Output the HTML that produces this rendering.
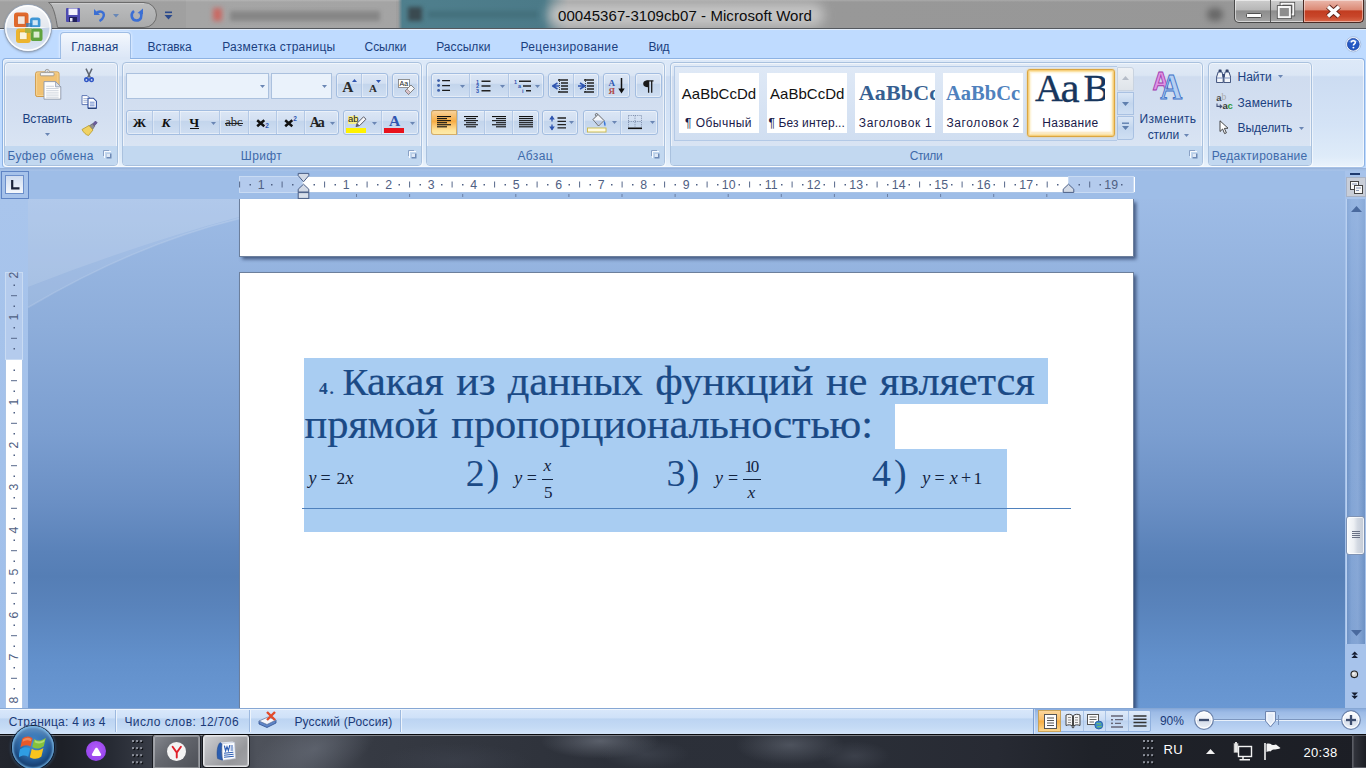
<!DOCTYPE html>
<html><head><meta charset="utf-8"><title>00045367-3109cb07 - Microsoft Word</title>
<style>
html,body{margin:0;padding:0;}
body{width:1366px;height:768px;overflow:hidden;position:relative;background:#bfdbff;}
#root{position:absolute;left:0;top:0;width:1366px;height:768px;overflow:hidden;font-family:"Liberation Sans",sans-serif;font-size:12px;color:#1b3f80;}
#root div,#root span,#root svg{position:absolute;box-sizing:border-box;}
#root span.t{white-space:nowrap;line-height:1;}
</style></head>
<body>
<div id="root">
<!-- s1_title -->
<div style="left:0px;top:0px;width:1366px;height:30px;background:linear-gradient(90deg,#a1a1a1 0,#9f9f9f 28%,#989898 60%,#979797 100%);"></div>
<div style="left:0px;top:0px;width:1366px;height:2px;background:linear-gradient(rgba(255,255,255,.18),rgba(255,255,255,0));"></div>
<div style="left:398px;top:0px;width:170px;height:28px;background:linear-gradient(90deg,rgba(78,124,138,0) 0,#4f7f8d 2.5%,#4b7a88 86%,rgba(78,124,138,0) 100%);"></div>
<div style="left:408px;top:7px;width:14px;height:14px;background:#3a4a50;filter:blur(2px);"></div>
<div style="left:428px;top:11px;width:110px;height:7px;background:#44707c;filter:blur(2px);"></div>
<div style="left:213px;top:8px;width:9px;height:13px;background:#c7605a;filter:blur(2.5px);"></div>
<div style="left:230px;top:10.5px;width:150px;height:10px;background:#7f7f7f;filter:blur(2.2px);"></div>
<div style="left:186px;top:0px;width:210px;height:28px;background:rgba(255,255,255,.06);"></div>
<div style="left:1207px;top:8px;width:16px;height:13px;background:#686868;filter:blur(3px);border-radius:6px;"></div>
<div style="left:548px;top:3px;width:276px;height:24px;background:#c9c9c9;filter:blur(6px);border-radius:12px;opacity:.9;"></div>
<span class="t" style="left:558.00px;top:8.20px;font-size:15px;color:#0c0c0c;letter-spacing:0.072px;">00045367-3109cb07 - Microsoft Word</span>
<div style="left:0px;top:28px;width:1366px;height:1px;background:#54585e;"></div>
<div style="left:0px;top:29px;width:1366px;height:1px;background:#e4effd;"></div>
<svg style="left:40px;top:0px;" width="125" height="30" viewBox="0 0 125 30"><defs><linearGradient id="qg" x1="0" y1="0" x2="0" y2="1"><stop offset="0" stop-color="#bcbdbe"/><stop offset="1" stop-color="#a9aaab"/></linearGradient></defs><path d="M8.5 2.5 C14 5.5 16 19 17.5 27.5 L104 27.5 A12.5 12.5 0 0 0 104 2.5 Z" fill="url(#qg)" stroke="#6c6c6c" stroke-width="1"/><path d="M12 3.6 L104 3.6" stroke="#d4d4d4" stroke-width="1" opacity=".8"/></svg>
<svg style="left:65px;top:7px;" width="16" height="16" viewBox="0 0 16 16"><rect x="1" y="1" width="14" height="14" rx="1" fill="#4d4bb0"/><rect x="3.5" y="1.5" width="9" height="6.5" fill="#f2f2fb"/><rect x="4" y="10" width="8" height="5" fill="#20205a"/><rect x="5" y="11" width="2.5" height="3.5" fill="#e8e8f5"/></svg>
<svg style="left:92px;top:8px;" width="16" height="14" viewBox="0 0 16 14"><path d="M2 1 L2 7 L8 7 Z" fill="#3b6fd4"/><path d="M4 5.5 C8 1.5 13 4 11.5 8.5 C11 10.5 9.5 12 7.5 13" fill="none" stroke="#3b6fd4" stroke-width="2.4"/></svg>
<svg style="left:113px;top:14px;" width="7" height="4" viewBox="0 0 7 4"><path d="M0 0 L6 0 L3 3.5 Z" fill="#6787b7"/></svg>
<svg style="left:129px;top:8px;" width="16" height="15" viewBox="0 0 16 15"><path d="M14 0.5 L14 6.5 L8.5 5 Z" fill="#3b6fd4"/><path d="M5 3 C1 6 2.5 12.5 7.5 12.5 C12 12.5 13.5 8 11.5 5" fill="none" stroke="#3b6fd4" stroke-width="2.6"/></svg>
<svg style="left:164px;top:11px;" width="10" height="10" viewBox="0 0 10 10"><rect x="1" y="0.5" width="7" height="1.6" fill="#2c4a8c"/><path d="M0.5 4 L8.5 4 L4.5 8.5 Z" fill="#2c4a8c"/></svg>
<div style="left:1234px;top:0px;width:130px;height:23px;border:1px solid #4a4a4a;border-top:none;border-radius:0 0 5px 5px;background:linear-gradient(#cdcdcd 0,#b7b7b7 44%,#8d8d8d 50%,#9a9a9a 80%,#a6a6a6 100%);box-shadow:inset 0 0 0 1px rgba(255,255,255,.55);"></div>
<div style="left:1270px;top:0px;width:1px;height:22px;background:#5a5a5a;"></div>
<div style="left:1303px;top:0px;width:61px;height:23px;border:1px solid #4a2a24;border-top:none;border-radius:0 0 5px 0;background:linear-gradient(#eab8ac 0,#dc8a76 44%,#c23c20 50%,#c8462a 75%,#d8684a 100%);box-shadow:inset 0 0 0 1px rgba(255,255,255,.45);"></div>
<div style="left:1245.5px;top:12.8px;width:16px;height:4.8px;background:#fbfbfb;border:1px solid #4e4e4e;border-radius:1.5px;"></div>
<svg style="left:1276px;top:1px;" width="20" height="19" viewBox="0 0 20 19"><rect x="5.5" y="2.7" width="11.8" height="10.8" fill="none" stroke="#4a4a4a" stroke-width="3.6"/><rect x="5.5" y="2.7" width="11.8" height="10.8" fill="none" stroke="#f6f6f6" stroke-width="2"/><rect x="2.7" y="6" width="11.2" height="10.2" fill="#a4a4a4" stroke="#4a4a4a" stroke-width="3.6"/><rect x="2.7" y="6" width="11.2" height="10.2" fill="#8e8e8e" stroke="#f6f6f6" stroke-width="2"/></svg>
<svg style="left:1324px;top:2.5px;" width="19" height="17" viewBox="0 0 19 17"><path d="M4 3.6 L15 13.4 M15 3.6 L4 13.4" stroke="#5a2018" stroke-width="5.4" stroke-linecap="butt"/><path d="M4 3.6 L15 13.4 M15 3.6 L4 13.4" stroke="#fdfdfd" stroke-width="3.5" stroke-linecap="butt"/></svg>
<div style="left:0px;top:30px;width:1366px;height:29px;background:#bfdbff;"></div>
<div style="left:60px;top:32px;width:71px;height:27px;background:linear-gradient(#f4f8fd 0,#e6eefa 50%,#dbe6f6 100%);border:1px solid #9ebde5;border-bottom:none;border-radius:4px 4px 0 0;box-shadow:0 0 3px rgba(255,255,255,.9);"></div>
<span class="t" style="left:71.30px;top:40.74px;font-size:12px;color:#1b3f80;letter-spacing:0.232px;">Главная</span>
<span class="t" style="left:147.60px;top:40.74px;font-size:12px;color:#1b3f80;letter-spacing:-0.100px;">Вставка</span>
<span class="t" style="left:222.20px;top:40.74px;font-size:12px;color:#1b3f80;letter-spacing:0.255px;">Разметка страницы</span>
<span class="t" style="left:364.60px;top:40.74px;font-size:12px;color:#1b3f80;letter-spacing:-0.091px;">Ссылки</span>
<span class="t" style="left:436.20px;top:40.74px;font-size:12px;color:#1b3f80;letter-spacing:0.055px;">Рассылки</span>
<span class="t" style="left:520.40px;top:40.74px;font-size:12px;color:#1b3f80;letter-spacing:0.389px;">Рецензирование</span>
<span class="t" style="left:648.60px;top:40.74px;font-size:12px;color:#1b3f80;letter-spacing:-0.436px;">Вид</span>
<svg style="left:1345px;top:35.5px;" width="17" height="17" viewBox="0 0 17 17"><circle cx="8.3" cy="8.3" r="7.6" fill="#f4f8ff" stroke="#9db6dc" stroke-width=".8"/><circle cx="8.3" cy="8.3" r="5.9" fill="#2458c4" stroke="#1a3f9a" stroke-width=".7"/><path d="M3.6 6.5 C5 2.5 11.6 2.5 13 6.5 C10 5 6.6 5 3.6 6.5 Z" fill="#6f9ae8" opacity=".8"/><path d="M6.3 6.6 C6.3 4.2 10.3 4.2 10.3 6.6 C10.3 8 8.4 8 8.4 9.6" fill="none" stroke="#fff" stroke-width="1.6"/><circle cx="8.4" cy="11.6" r=".95" fill="#fff"/></svg>
<div style="left:5px;top:5px;width:46px;height:46px;border-radius:50%;background:linear-gradient(#f4f6f9 0,#e4e8ee 48%,#c3d2e6 50%,#dfe8f3 100%);box-shadow:0 0 0 1px #9aa7ba,0 1px 3px rgba(0,0,0,.45),inset 0 0 0 1.5px rgba(255,255,255,.9);"></div>
<svg style="left:13px;top:11px;" width="31" height="33" viewBox="0 0 31 33"><rect x="1" y="1.4" width="14.5" height="15.4" rx="3" fill="#e0692c"/><rect x="4.6" y="5" width="7.4" height="8.2" fill="#f3e6dc"/><rect x="4.6" y="5" width="7.4" height="8.2" fill="none" stroke="#c9521a" stroke-width=".6"/><rect x="17" y="6.5" width="10.4" height="10.3" rx="2.6" fill="#3f97d6"/><rect x="19.6" y="9.2" width="5.2" height="5" fill="#d3e6f4"/><rect x="3" y="17.5" width="14.7" height="14.5" rx="3" fill="#ecb42c"/><rect x="6.6" y="21" width="7.4" height="7.6" fill="#fbf4dc"/><rect x="6.6" y="21" width="7.4" height="7.6" fill="none" stroke="#d49a14" stroke-width=".6"/><rect x="17.7" y="17.5" width="11.8" height="12.5" rx="2.6" fill="#5fa33e"/><rect x="20.6" y="20.6" width="5.8" height="6" fill="#dcecd2"/><rect x="13" y="12" width="6" height="4" fill="#2f7fc0" opacity=".7"/><rect x="12" y="17" width="7" height="5" fill="#8ab04a" opacity=".65"/></svg>
<div style="left:6px;top:27px;width:44px;height:1px;background:linear-gradient(90deg,rgba(255,255,255,0),rgba(255,255,255,.85) 20%,rgba(255,255,255,.85) 80%,rgba(255,255,255,0));"></div>
<!-- s2_ribbon -->
<div style="left:0px;top:58px;width:1366px;height:112px;background:#bfdbff;"></div>
<div style="left:2px;top:58px;width:1362.5px;height:110px;border:1px solid #8db2e3;border-bottom-color:#a6c1e6;border-radius:4px;background:linear-gradient(#dde9f8 0,#d9e6f7 15%,#ccdcf2 16.5%,#d4e3f6 60%,#deebf9 90%,#eaf3fc 100%);box-shadow:inset 0 0 0 1px rgba(255,255,255,.6);"></div>
<div style="left:0px;top:168px;width:1366px;height:3.5px;background:linear-gradient(#95afd6 0,#a3bfe6 40%,#a8c4ea 100%);"></div>
<div style="left:61px;top:57px;width:69px;height:3px;background:#dbe6f6;"></div>
<div style="left:4.4px;top:61.5px;width:113.19999999999999px;height:104px;border:1px solid #a9c1de;border-radius:4px;background:linear-gradient(#e1eaf6 0,#dbe6f4 12%,#cfdcef 13.5%,#d3dff1 50%,#d9e4f3 81%,#d9e4f3 100%);box-shadow:inset 0 0 0 1px rgba(255,255,255,.55),1px 1px 0 rgba(255,255,255,.55);overflow:hidden;"><div style="left:-1px;top:83.5px;width:113.19999999999999px;height:20px;background:#c2d8f0;"></div></div>
<span class="t" style="left:7.60px;top:150.34px;font-size:12px;color:#3e6aaa;letter-spacing:0.388px;">Буфер обмена</span>
<svg style="left:103.1px;top:150px;" width="9" height="9" viewBox="0 0 9 9"><path d="M0.5 6 L0.5 0.5 L6 0.5" fill="none" stroke="#8aa2c6" stroke-width="1"/><path d="M0.5 7 L0.5 .5 L7 .5" fill="none" stroke="#fff" stroke-width="1" transform="translate(1,1)" opacity=".9"/><rect x="3.5" y="3.5" width="5" height="5" fill="#6e8ab5"/><rect x="3.5" y="3.5" width="3.5" height="3.5" fill="#dfe9f6"/></svg>
<svg style="left:34px;top:68px;" width="29" height="33" viewBox="0 0 29 33"><rect x="1.6" y="3.9" width="23.4" height="24.6" rx="1.6" fill="#f1c273" stroke="#cf9a4a" stroke-width="1"/><rect x="2.6" y="4.9" width="21.4" height="22.6" rx="1" fill="none" stroke="#f8d99c" stroke-width=".8"/><circle cx="13.2" cy="3.4" r="2" fill="#f4f4f4" stroke="#8a8a8a" stroke-width=".8"/><circle cx="13.2" cy="3.2" r=".7" fill="#9a9a9a"/><rect x="6.4" y="4.6" width="13.6" height="3.2" rx=".8" fill="#f6f6f6" stroke="#8f8f8f" stroke-width=".8"/><path d="M10 13.6 L21.6 13.6 L26.8 18.8 L26.8 31.2 L10 31.2 Z" fill="#fdfdfd" stroke="#8d97aa" stroke-width=".9"/><path d="M21.6 13.6 L21.6 18.8 L26.8 18.8 Z" fill="#dfe4ec" stroke="#8d97aa" stroke-width=".8"/><path d="M12.2 18.3 H20 M12.2 20.5 H24.6 M12.2 22.7 H24.6 M12.2 24.9 H24.6 M12.2 27.1 H24.6 M12.2 29.2 H24.6" stroke="#c3cad6" stroke-width=".8"/></svg>
<span class="t" style="left:22.50px;top:112.84px;font-size:12px;color:#1b3f80;letter-spacing:-0.171px;">Вставить</span>
<svg style="left:44.7px;top:133.1px;" width="5" height="3" viewBox="0 0 5 3"><path d="M0 0 L5 0 L2.5 3 Z" fill="#6a86b4"/></svg>
<svg style="left:82.5px;top:68px;" width="12" height="15" viewBox="0 0 12 15"><path d="M3 0.6 L7.2 9.4 M9 0.6 L4.8 9.4" stroke="#5f6672" stroke-width="1.5"/><ellipse cx="3.5" cy="11.6" rx="2.5" ry="2.7" fill="#2f55c4"/><ellipse cx="8.5" cy="11.6" rx="2.5" ry="2.7" fill="#2f55c4"/><circle cx="3.4" cy="11.9" r=".9" fill="#cfdcf2"/><circle cx="8.6" cy="11.9" r=".9" fill="#cfdcf2"/></svg>
<svg style="left:80.5px;top:94.5px;" width="17" height="14" viewBox="0 0 17 14"><path d="M1 0.6 H6.2 L8.6 3 V9.6 H1 Z" fill="#fff" stroke="#5f78b4" stroke-width="1"/><path d="M2.4 3.6 H6.6 M2.4 5.4 H6.6 M2.4 7.2 H6.6" stroke="#8fa3cc" stroke-width=".8"/><path d="M7 3.2 H12.4 L15.4 6.2 V13 H7 Z" fill="#fff" stroke="#2d4c9c" stroke-width="1.1"/><path d="M7 13.4 H15.6" stroke="#20386e" stroke-width="1"/><path d="M8.8 7.2 H13.6 M8.8 9 H13.6 M8.8 10.8 H13.6" stroke="#5f7fc8" stroke-width=".9"/></svg>
<svg style="left:80.5px;top:120px;" width="17" height="16" viewBox="0 0 17 16"><path d="M11 4.5 L14.5 1 L16.2 2.8 L12.8 6.5 Z" fill="#6a5a9a" stroke="#4a3f78" stroke-width=".6"/><path d="M8.2 5.8 L11.5 3.8 L13.6 6.2 L11.5 9.6 Z" fill="#8f8f95" stroke="#5a5a60" stroke-width=".6"/><path d="M1 9.5 L8 5.5 L12 10 L7.5 15.5 C5 15 2.5 12.5 1 9.5 Z" fill="#f0d264" stroke="#b89a2a" stroke-width=".8"/></svg>
<div style="left:121.6px;top:61.5px;width:300.70000000000005px;height:104px;border:1px solid #a9c1de;border-radius:4px;background:linear-gradient(#e1eaf6 0,#dbe6f4 12%,#cfdcef 13.5%,#d3dff1 50%,#d9e4f3 81%,#d9e4f3 100%);box-shadow:inset 0 0 0 1px rgba(255,255,255,.55),1px 1px 0 rgba(255,255,255,.55);overflow:hidden;"><div style="left:-1px;top:83.5px;width:300.70000000000005px;height:20px;background:#c2d8f0;"></div></div>
<span class="t" style="left:240.80px;top:150.34px;font-size:12px;color:#3e6aaa;letter-spacing:0.384px;">Шрифт</span>
<svg style="left:407.8px;top:150px;" width="9" height="9" viewBox="0 0 9 9"><path d="M0.5 6 L0.5 0.5 L6 0.5" fill="none" stroke="#8aa2c6" stroke-width="1"/><path d="M0.5 7 L0.5 .5 L7 .5" fill="none" stroke="#fff" stroke-width="1" transform="translate(1,1)" opacity=".9"/><rect x="3.5" y="3.5" width="5" height="5" fill="#6e8ab5"/><rect x="3.5" y="3.5" width="3.5" height="3.5" fill="#dfe9f6"/></svg>
<div style="left:125.5px;top:73px;width:143.5px;height:26px;border:1px solid #abc1de;background:#eaf2fb;"></div>
<div style="left:270.5px;top:73px;width:61px;height:26px;border:1px solid #abc1de;background:#eaf2fb;"></div>
<svg style="left:259.9px;top:84.7px;" width="5" height="3" viewBox="0 0 5 3"><path d="M0 0 L5 0 L2.5 3 Z" fill="#6a86b4"/></svg>
<svg style="left:321.9px;top:84.7px;" width="5" height="3" viewBox="0 0 5 3"><path d="M0 0 L5 0 L2.5 3 Z" fill="#6a86b4"/></svg>
<div style="left:336.2px;top:73.4px;width:51.5px;height:25.0px;border:1px solid #a3bde0;border-radius:3px;background:linear-gradient(#dbe6f5 0,#d3e0f2 40%,#c3d5ec 45%,#cfdef2 100%);box-shadow:inset 0 0 0 1px rgba(255,255,255,.45);"></div>
<div style="left:361.2px;top:74.4px;width:1px;height:23.0px;background:#b4c9e6;"></div>
<div style="left:362.2px;top:74.4px;width:1px;height:23.0px;background:rgba(255,255,255,.35);"></div>
<span class="t" style="left:342.20px;top:79.22px;font-size:15.5px;color:#2a2a2a;font-family:'Liberation Serif',serif;font-weight:bold;">A</span>
<svg style="left:351.5px;top:79px;" width="5" height="3" viewBox="0 0 5 3"><path d="M0 3 L5 3 L2.5 0 Z" fill="#2f55b0"/></svg>
<span class="t" style="left:369.00px;top:82.99px;font-size:11px;color:#2a2a2a;font-family:'Liberation Serif',serif;font-weight:bold;">A</span>
<svg style="left:376.2px;top:80px;" width="5" height="3" viewBox="0 0 5 3"><path d="M0 0 L5 0 L2.5 3 Z" fill="#2f55b0"/></svg>
<div style="left:391.6px;top:73.4px;width:27.19999999999999px;height:25.0px;border:1px solid #a3bde0;border-radius:3px;background:linear-gradient(#dbe6f5 0,#d3e0f2 40%,#c3d5ec 45%,#cfdef2 100%);box-shadow:inset 0 0 0 1px rgba(255,255,255,.45);"></div>
<svg style="left:397.5px;top:78.5px;" width="18" height="17" viewBox="0 0 18 17"><rect x="0.5" y="0.5" width="11" height="8" fill="#fff" stroke="#7a7a7a" stroke-width=".8"/><text x="1.6" y="7.2" font-family="Liberation Sans" font-size="7" fill="#222">Aa</text><path d="M7 12 L13 6 L16.5 9.5 L10.5 15.5 Z" fill="#f4f4f6" stroke="#777" stroke-width=".9"/><path d="M7 12 L9 10 L12.5 13.5 L10.5 15.5 Z" fill="#d9c0c8" stroke="#777" stroke-width=".6"/></svg>
<div style="left:125.5px;top:110.4px;width:213.3px;height:24.599999999999994px;border:1px solid #a3bde0;border-radius:3px;background:linear-gradient(#dbe6f5 0,#d3e0f2 40%,#c3d5ec 45%,#cfdef2 100%);box-shadow:inset 0 0 0 1px rgba(255,255,255,.45);"></div>
<div style="left:151.6px;top:111.4px;width:1px;height:22.599999999999994px;background:#b4c9e6;"></div>
<div style="left:152.6px;top:111.4px;width:1px;height:22.599999999999994px;background:rgba(255,255,255,.35);"></div>
<div style="left:179.2px;top:111.4px;width:1px;height:22.599999999999994px;background:#b4c9e6;"></div>
<div style="left:180.2px;top:111.4px;width:1px;height:22.599999999999994px;background:rgba(255,255,255,.35);"></div>
<div style="left:219.4px;top:111.4px;width:1px;height:22.599999999999994px;background:#b4c9e6;"></div>
<div style="left:220.4px;top:111.4px;width:1px;height:22.599999999999994px;background:rgba(255,255,255,.35);"></div>
<div style="left:247.5px;top:111.4px;width:1px;height:22.599999999999994px;background:#b4c9e6;"></div>
<div style="left:248.5px;top:111.4px;width:1px;height:22.599999999999994px;background:rgba(255,255,255,.35);"></div>
<div style="left:275.6px;top:111.4px;width:1px;height:22.599999999999994px;background:#b4c9e6;"></div>
<div style="left:276.6px;top:111.4px;width:1px;height:22.599999999999994px;background:rgba(255,255,255,.35);"></div>
<div style="left:303.7px;top:111.4px;width:1px;height:22.599999999999994px;background:#b4c9e6;"></div>
<div style="left:304.7px;top:111.4px;width:1px;height:22.599999999999994px;background:rgba(255,255,255,.35);"></div>
<span class="t" style="left:132.73px;top:115.99px;font-size:13.5px;color:#111;font-family:'Liberation Serif',serif;font-weight:bold;">Ж</span>
<span class="t" style="left:161.42px;top:115.99px;font-size:13.5px;color:#111;font-family:'Liberation Serif',serif;font-weight:bold;font-style:italic;">К</span>
<span class="t" style="left:189.15px;top:115.89px;font-size:13.5px;color:#111;font-family:'Liberation Serif',serif;font-weight:bold;">Ч</span>
<div style="left:189.5px;top:128.2px;width:9.3px;height:1.2px;background:#111;"></div>
<svg style="left:211.0px;top:121.8px;" width="5" height="3" viewBox="0 0 5 3"><path d="M0 0 L5 0 L2.5 3 Z" fill="#6a86b4"/></svg>
<span class="t" style="left:225.13px;top:116.43px;font-size:12.5px;color:#222;font-family:'Liberation Serif',serif;">abc</span>
<div style="left:225px;top:123.3px;width:17.6px;height:1px;background:#222;"></div>
<svg style="left:255.7px;top:119.3px;" width="9.5" height="8.5" viewBox="0 0 9.5 8.5"><path d="M1.2 1.2 L8.3 7.3 M8.3 1.2 L1.2 7.3" stroke="#111" stroke-width="2.5"/></svg>
<span class="t" style="left:265.20px;top:123.30px;font-size:6.5px;color:#2f55b0;font-weight:bold;">2</span>
<svg style="left:283.9px;top:119.3px;" width="9.5" height="8.5" viewBox="0 0 9.5 8.5"><path d="M1.2 1.2 L8.3 7.3 M8.3 1.2 L1.2 7.3" stroke="#111" stroke-width="2.5"/></svg>
<span class="t" style="left:293.20px;top:115.90px;font-size:6.5px;color:#2f55b0;font-weight:bold;">2</span>
<span class="t" style="left:309.80px;top:116.28px;font-size:14px;color:#222;font-family:'Liberation Serif',serif;font-weight:bold;letter-spacing:-2.108px;">Aa</span>
<svg style="left:330.2px;top:121.8px;" width="5" height="3" viewBox="0 0 5 3"><path d="M0 0 L5 0 L2.5 3 Z" fill="#6a86b4"/></svg>
<div style="left:342.7px;top:110.4px;width:76.10000000000002px;height:24.599999999999994px;border:1px solid #a3bde0;border-radius:3px;background:linear-gradient(#dbe6f5 0,#d3e0f2 40%,#c3d5ec 45%,#cfdef2 100%);box-shadow:inset 0 0 0 1px rgba(255,255,255,.45);"></div>
<div style="left:380.5px;top:111.4px;width:1px;height:22.599999999999994px;background:#b4c9e6;"></div>
<div style="left:381.5px;top:111.4px;width:1px;height:22.599999999999994px;background:rgba(255,255,255,.35);"></div>
<div style="left:347.5px;top:115.5px;width:10.5px;height:8px;background:#f6ef8a;"></div>
<span class="t" style="left:348.00px;top:114.26px;font-size:9.5px;color:#222;">ab</span>
<svg style="left:354.5px;top:115.5px;" width="12" height="12" viewBox="0 0 12 12"><path d="M1 10.5 L2.2 7.2 L8.5 0.8 L11 3.2 L4.6 9.6 Z" fill="#f6f6f8" stroke="#4a4a55" stroke-width=".9"/><path d="M1 10.5 L2.2 7.2 L4.6 9.6 Z" fill="#5a5a66"/></svg>
<div style="left:345.9px;top:128px;width:20.2px;height:5.3px;background:#fff200;"></div>
<svg style="left:371.8px;top:121.8px;" width="5" height="3" viewBox="0 0 5 3"><path d="M0 0 L5 0 L2.5 3 Z" fill="#6a86b4"/></svg>
<span class="t" style="left:389.00px;top:113.32px;font-size:15.5px;color:#2f55b0;font-family:'Liberation Serif',serif;font-weight:bold;">A</span>
<div style="left:384.2px;top:128px;width:19.8px;height:5.3px;background:#e8121c;"></div>
<svg style="left:410.2px;top:121.8px;" width="5" height="3" viewBox="0 0 5 3"><path d="M0 0 L5 0 L2.5 3 Z" fill="#6a86b4"/></svg>
<!-- s2b_ribbon -->
<div style="left:426.1px;top:61.5px;width:239.39999999999998px;height:104px;border:1px solid #a9c1de;border-radius:4px;background:linear-gradient(#e1eaf6 0,#dbe6f4 12%,#cfdcef 13.5%,#d3dff1 50%,#d9e4f3 81%,#d9e4f3 100%);box-shadow:inset 0 0 0 1px rgba(255,255,255,.55),1px 1px 0 rgba(255,255,255,.55);overflow:hidden;"><div style="left:-1px;top:83.5px;width:239.39999999999998px;height:20px;background:#c2d8f0;"></div></div>
<span class="t" style="left:517.45px;top:150.34px;font-size:12px;color:#3e6aaa;letter-spacing:0.368px;">Абзац</span>
<svg style="left:651.0px;top:150px;" width="9" height="9" viewBox="0 0 9 9"><path d="M0.5 6 L0.5 0.5 L6 0.5" fill="none" stroke="#8aa2c6" stroke-width="1"/><path d="M0.5 7 L0.5 .5 L7 .5" fill="none" stroke="#fff" stroke-width="1" transform="translate(1,1)" opacity=".9"/><rect x="3.5" y="3.5" width="5" height="5" fill="#6e8ab5"/><rect x="3.5" y="3.5" width="3.5" height="3.5" fill="#dfe9f6"/></svg>
<div style="left:430.5px;top:73.4px;width:113.20000000000005px;height:25.0px;border:1px solid #a3bde0;border-radius:3px;background:linear-gradient(#dbe6f5 0,#d3e0f2 40%,#c3d5ec 45%,#cfdef2 100%);box-shadow:inset 0 0 0 1px rgba(255,255,255,.45);"></div>
<div style="left:468.8px;top:74.4px;width:1px;height:23.0px;background:#b4c9e6;"></div>
<div style="left:469.8px;top:74.4px;width:1px;height:23.0px;background:rgba(255,255,255,.35);"></div>
<div style="left:508.2px;top:74.4px;width:1px;height:23.0px;background:#b4c9e6;"></div>
<div style="left:509.2px;top:74.4px;width:1px;height:23.0px;background:rgba(255,255,255,.35);"></div>
<svg style="left:437px;top:79px;" width="14" height="13" viewBox="0 0 14 13"><circle cx="1.6" cy="1.6" r="1.45" fill="#3d5fa8"/><circle cx="1.6" cy="6.5" r="1.45" fill="#3d5fa8"/><circle cx="1.6" cy="11.4" r="1.45" fill="#3d5fa8"/><path d="M5.1 1.6 H13 M5.1 6.5 H13 M5.1 11.4 H13" stroke="#1a1a1a" stroke-width="1.25"/></svg>
<svg style="left:459.8px;top:84.7px;" width="5" height="3" viewBox="0 0 5 3"><path d="M0 0 L5 0 L2.5 3 Z" fill="#6a86b4"/></svg>
<svg style="left:475.5px;top:79px;" width="15" height="14" viewBox="0 0 15 14"><text x="0" y="4.6" font-family="Liberation Sans" font-weight="bold" font-size="5.5" fill="#2f55b0">1</text><text x="0" y="9.4" font-family="Liberation Sans" font-weight="bold" font-size="5.5" fill="#2f55b0">2</text><text x="0" y="14" font-family="Liberation Sans" font-weight="bold" font-size="5.5" fill="#2f55b0">3</text><path d="M5.5 2.2 H14.5 M5.5 7 H14.5 M5.5 11.8 H14.5" stroke="#222" stroke-width="1.4"/></svg>
<svg style="left:499.7px;top:84.7px;" width="5" height="3" viewBox="0 0 5 3"><path d="M0 0 L5 0 L2.5 3 Z" fill="#6a86b4"/></svg>
<svg style="left:513.5px;top:79px;" width="18" height="14" viewBox="0 0 18 14"><text x="0" y="4.6" font-family="Liberation Sans" font-weight="bold" font-size="5.5" fill="#2f55b0">1</text><text x="4" y="9.4" font-family="Liberation Sans" font-weight="bold" font-size="5.5" fill="#2f55b0">a</text><text x="8" y="14" font-family="Liberation Sans" font-weight="bold" font-size="5.5" fill="#2f55b0">i</text><path d="M5 2.2 H17 M9 7 H17 M12 11.8 H17" stroke="#222" stroke-width="1.4"/></svg>
<svg style="left:535.1px;top:84.7px;" width="5" height="3" viewBox="0 0 5 3"><path d="M0 0 L5 0 L2.5 3 Z" fill="#6a86b4"/></svg>
<div style="left:547.5px;top:73.4px;width:51.799999999999955px;height:25.0px;border:1px solid #a3bde0;border-radius:3px;background:linear-gradient(#dbe6f5 0,#d3e0f2 40%,#c3d5ec 45%,#cfdef2 100%);box-shadow:inset 0 0 0 1px rgba(255,255,255,.45);"></div>
<div style="left:573.3px;top:74.4px;width:1px;height:23.0px;background:#b4c9e6;"></div>
<div style="left:574.3px;top:74.4px;width:1px;height:23.0px;background:rgba(255,255,255,.35);"></div>
<svg style="left:552px;top:79px;" width="17" height="14" viewBox="0 0 17 14"><path d="M5.5 4 L0.5 7 L5.5 10 M0.5 7 H7" fill="none" stroke="#2f55b0" stroke-width="1.5"/><path d="M6 1 H16 M9 4 H16 M9 7 H16 M9 10 H16 M6 13 H16" stroke="#222" stroke-width="1.4"/><path d="M7.5 0 V14" stroke="#222" stroke-width=".8" stroke-dasharray="1 1"/></svg>
<svg style="left:578px;top:79px;" width="17" height="14" viewBox="0 0 17 14"><path d="M2 4 L7 7 L2 10 M0 7 H7" fill="none" stroke="#2f55b0" stroke-width="1.5"/><path d="M6 1 H16 M9 4 H16 M9 7 H16 M9 10 H16 M6 13 H16" stroke="#222" stroke-width="1.4"/><path d="M7.5 0 V14" stroke="#222" stroke-width=".8" stroke-dasharray="1 1"/></svg>
<div style="left:603.3px;top:73.4px;width:27.0px;height:25.0px;border:1px solid #a3bde0;border-radius:3px;background:linear-gradient(#dbe6f5 0,#d3e0f2 40%,#c3d5ec 45%,#cfdef2 100%);box-shadow:inset 0 0 0 1px rgba(255,255,255,.45);"></div>
<span class="t" style="left:608.50px;top:79.26px;font-size:9px;color:#2f55b0;font-family:'Liberation Serif',serif;font-weight:bold;">А</span>
<span class="t" style="left:608.50px;top:87.46px;font-size:9px;color:#b04a4a;font-family:'Liberation Serif',serif;font-weight:bold;">Я</span>
<svg style="left:617.5px;top:78px;" width="7" height="16" viewBox="0 0 7 16"><path d="M3.5 0 V12" stroke="#111" stroke-width="1.5"/><path d="M0.3 10.5 L6.7 10.5 L3.5 15.5 Z" fill="#111"/></svg>
<div style="left:634.5px;top:73.4px;width:27.200000000000045px;height:25.0px;border:1px solid #a3bde0;border-radius:3px;background:linear-gradient(#dbe6f5 0,#d3e0f2 40%,#c3d5ec 45%,#cfdef2 100%);box-shadow:inset 0 0 0 1px rgba(255,255,255,.45);"></div>
<svg style="left:643px;top:79.5px;" width="11" height="13" viewBox="0 0 11 13"><path d="M4.6 0.3 H10.5 V1.5 H4.6 Z" fill="#1a1a1a"/><path d="M5.2 0.3 C1.5 0.3 0.2 2 0.2 3.8 C0.2 5.8 1.8 7.3 5.2 7.3 Z" fill="#1a1a1a"/><path d="M5.6 0.8 V12.8 M8.7 0.8 V12.8" stroke="#1a1a1a" stroke-width="1.3"/></svg>
<div style="left:430.5px;top:110.4px;width:108.10000000000002px;height:24.599999999999994px;border:1px solid #a3bde0;border-radius:3px;background:linear-gradient(#dbe6f5 0,#d3e0f2 40%,#c3d5ec 45%,#cfdef2 100%);box-shadow:inset 0 0 0 1px rgba(255,255,255,.45);"></div>
<div style="left:430.5px;top:110.4px;width:26.5px;height:24.599999999999994px;border:1px solid #d4ad68;border-top-color:#b8935a;border-radius:3px 0 0 3px;background:linear-gradient(#f9d29a 0,#f8bd6a 25%,#f8ad44 45%,#fbc56e 62%,#fee49c 85%,#fdeaa8 100%);"></div>
<div style="left:484.4px;top:111.4px;width:1px;height:22.599999999999994px;background:#b4c9e6;"></div>
<div style="left:485.4px;top:111.4px;width:1px;height:22.599999999999994px;background:rgba(255,255,255,.35);"></div>
<div style="left:512.4px;top:111.4px;width:1px;height:22.599999999999994px;background:#b4c9e6;"></div>
<div style="left:513.4px;top:111.4px;width:1px;height:22.599999999999994px;background:rgba(255,255,255,.35);"></div>
<div style="left:457px;top:111.3px;width:1px;height:22.5px;background:#aac2e2;"></div>
<svg style="left:437.2px;top:116.2px;" width="14" height="12.299999999999999" viewBox="0 0 14 12.299999999999999"><rect x="0" y="0.0" width="14" height="1.1" fill="#111"/><rect x="0" y="2.05" width="10" height="1.1" fill="#111"/><rect x="0" y="4.1" width="14" height="1.1" fill="#111"/><rect x="0" y="6.1499999999999995" width="10" height="1.1" fill="#111"/><rect x="0" y="8.2" width="14" height="1.1" fill="#111"/><rect x="0" y="10.25" width="10" height="1.1" fill="#111"/></svg>
<svg style="left:464px;top:116.2px;" width="14" height="12.299999999999999" viewBox="0 0 14 12.299999999999999"><rect x="0.0" y="0.0" width="14" height="1.1" fill="#111"/><rect x="2.0" y="2.05" width="10" height="1.1" fill="#111"/><rect x="0.0" y="4.1" width="14" height="1.1" fill="#111"/><rect x="2.0" y="6.1499999999999995" width="10" height="1.1" fill="#111"/><rect x="0.0" y="8.2" width="14" height="1.1" fill="#111"/><rect x="2.0" y="10.25" width="10" height="1.1" fill="#111"/></svg>
<svg style="left:491.5px;top:116.2px;" width="14" height="12.299999999999999" viewBox="0 0 14 12.299999999999999"><rect x="0" y="0.0" width="14" height="1.1" fill="#111"/><rect x="4" y="2.05" width="10" height="1.1" fill="#111"/><rect x="0" y="4.1" width="14" height="1.1" fill="#111"/><rect x="4" y="6.1499999999999995" width="10" height="1.1" fill="#111"/><rect x="0" y="8.2" width="14" height="1.1" fill="#111"/><rect x="4" y="10.25" width="10" height="1.1" fill="#111"/></svg>
<svg style="left:519px;top:116.2px;" width="14" height="12.299999999999999" viewBox="0 0 14 12.299999999999999"><rect x="0" y="0.0" width="14" height="1.1" fill="#111"/><rect x="0" y="2.05" width="14" height="1.1" fill="#111"/><rect x="0" y="4.1" width="14" height="1.1" fill="#111"/><rect x="0" y="6.1499999999999995" width="14" height="1.1" fill="#111"/><rect x="0" y="8.2" width="14" height="1.1" fill="#111"/><rect x="0" y="10.25" width="14" height="1.1" fill="#111"/></svg>
<div style="left:542.4px;top:110.4px;width:36.10000000000002px;height:24.599999999999994px;border:1px solid #a3bde0;border-radius:3px;background:linear-gradient(#dbe6f5 0,#d3e0f2 40%,#c3d5ec 45%,#cfdef2 100%);box-shadow:inset 0 0 0 1px rgba(255,255,255,.45);"></div>
<svg style="left:548.5px;top:114.5px;" width="18" height="16" viewBox="0 0 18 16"><path d="M3 1.5 V6.5 M3 9.5 V14.5" stroke="#2f55b0" stroke-width="1.3"/><path d="M0.2 4.6 L3 0.4 L5.8 4.6 Z M0.2 11.4 L3 15.6 L5.8 11.4 Z" fill="#2f55b0"/><path d="M8.5 3 H17 M8.5 6.3 H17 M8.5 9.6 H17 M8.5 12.9 H17" stroke="#222" stroke-width="1.3"/></svg>
<svg style="left:568.8px;top:120.8px;" width="5" height="3" viewBox="0 0 5 3"><path d="M0 0 L5 0 L2.5 3 Z" fill="#6a86b4"/></svg>
<div style="left:582.7px;top:110.4px;width:75.79999999999995px;height:24.599999999999994px;border:1px solid #a3bde0;border-radius:3px;background:linear-gradient(#dbe6f5 0,#d3e0f2 40%,#c3d5ec 45%,#cfdef2 100%);box-shadow:inset 0 0 0 1px rgba(255,255,255,.45);"></div>
<div style="left:619.8px;top:111.4px;width:1px;height:22.599999999999994px;background:#b4c9e6;"></div>
<div style="left:620.8px;top:111.4px;width:1px;height:22.599999999999994px;background:rgba(255,255,255,.35);"></div>
<svg style="left:587px;top:112.5px;" width="20" height="20" viewBox="0 0 20 20"><path d="M6 6.5 L11 1.5 L17 7.5 L11.5 13 Z" fill="#f4f6fa" stroke="#555" stroke-width=".9"/><path d="M7 7.5 L16 7.5 L11.5 12 Z" fill="#b9c9e4"/><path d="M11 1.5 C9 -0.5 7.5 1 9 3.2" fill="none" stroke="#555" stroke-width=".9"/><path d="M17 7.5 C19 9.5 19 12 18 13.5 C17 12 16.5 10 17 7.5 Z" fill="#3a76d8"/><rect x="0.5" y="15" width="18.5" height="4" fill="#fffbe0" stroke="#c9b84a" stroke-width=".9"/></svg>
<svg style="left:611.6px;top:120.8px;" width="5" height="3" viewBox="0 0 5 3"><path d="M0 0 L5 0 L2.5 3 Z" fill="#6a86b4"/></svg>
<svg style="left:627.5px;top:115px;" width="14" height="15" viewBox="0 0 14 15"><path d="M0.5 0.5 H13.5 M0.5 6.5 H13.5 M0.5 0.5 V12 M7 0.5 V12 M13.5 0.5 V12" stroke="#7a8aa8" stroke-width="1" stroke-dasharray="1 1.2" fill="none"/><path d="M0 13.3 H14" stroke="#111" stroke-width="1.6"/></svg>
<svg style="left:650.1px;top:120.8px;" width="5" height="3" viewBox="0 0 5 3"><path d="M0 0 L5 0 L2.5 3 Z" fill="#6a86b4"/></svg>
<div style="left:669.5px;top:61.5px;width:533.5px;height:104px;border:1px solid #a9c1de;border-radius:4px;background:linear-gradient(#e1eaf6 0,#dbe6f4 12%,#cfdcef 13.5%,#d3dff1 50%,#d9e4f3 81%,#d9e4f3 100%);box-shadow:inset 0 0 0 1px rgba(255,255,255,.55),1px 1px 0 rgba(255,255,255,.55);overflow:hidden;"><div style="left:-1px;top:83.5px;width:533.5px;height:20px;background:#c2d8f0;"></div></div>
<span class="t" style="left:909.80px;top:150.34px;font-size:12px;color:#3e6aaa;letter-spacing:-0.434px;">Стили</span>
<svg style="left:1188.5px;top:150px;" width="9" height="9" viewBox="0 0 9 9"><path d="M0.5 6 L0.5 0.5 L6 0.5" fill="none" stroke="#8aa2c6" stroke-width="1"/><path d="M0.5 7 L0.5 .5 L7 .5" fill="none" stroke="#fff" stroke-width="1" transform="translate(1,1)" opacity=".9"/><rect x="3.5" y="3.5" width="5" height="5" fill="#6e8ab5"/><rect x="3.5" y="3.5" width="3.5" height="3.5" fill="#dfe9f6"/></svg>
<div style="left:674.2px;top:65.8px;width:443px;height:75px;border:1px solid #b3c9e6;border-right:none;background:linear-gradient(#dfe9f6,#d0def1);"></div>
<div style="left:678.9px;top:72.8px;width:80px;height:60px;background:#fff;overflow:hidden;"></div>
<span class="t" style="left:685.00px;top:116.54px;font-size:12px;color:#1a1a4a;letter-spacing:0.465px;">¶ Обычный</span>
<div style="left:767.1px;top:72.8px;width:80px;height:60px;background:#fff;overflow:hidden;"></div>
<span class="t" style="left:768.60px;top:116.54px;font-size:12px;color:#1a1a4a;letter-spacing:0.104px;">¶ Без интер...</span>
<div style="left:855.2px;top:72.8px;width:80px;height:60px;background:#fff;overflow:hidden;"></div>
<span class="t" style="left:858.80px;top:116.54px;font-size:12px;color:#1a1a4a;letter-spacing:0.634px;">Заголовок 1</span>
<div style="left:943.2px;top:72.8px;width:80px;height:60px;background:#fff;overflow:hidden;"></div>
<span class="t" style="left:946.40px;top:116.54px;font-size:12px;color:#1a1a4a;letter-spacing:0.634px;">Заголовок 2</span>
<span class="t" style="left:681.80px;top:86.30px;font-size:15px;color:#111;letter-spacing:0.025px;">AaBbCcDd</span>
<span class="t" style="left:770.00px;top:86.30px;font-size:15px;color:#111;letter-spacing:0.025px;">AaBbCcDd</span>
<div style="left:855.2px;top:72.8px;width:80px;height:60px;overflow:hidden;"><span class="t" style="left:3.50px;top:8.78px;font-size:22px;color:#365f91;font-family:'Liberation Serif',serif;font-weight:bold;letter-spacing:0.175px;">AaBbCc</span></div>
<span class="t" style="left:946.00px;top:82.83px;font-size:20.5px;color:#4f81bd;font-family:'Liberation Serif',serif;font-weight:bold;letter-spacing:0.028px;">AaBbCc</span>
<div style="left:1027.4px;top:69.3px;width:87.2px;height:67.6px;border-radius:3px;background:#fff;border:1px solid #dba640;box-shadow:inset 0 0 0 1px #f6cf7c,inset 0 0 0 2px #fbe2a6,inset 0 0 2px 3px #fdf0cf,inset 0 -4px 3px -1px #f3bf5c,0 0 2px rgba(240,190,90,.8);overflow:hidden;"></div>
<span class="t" style="left:1035.00px;top:69.36px;font-size:38.5px;color:#17365d;font-family:'Liberation Serif',serif;-webkit-text-stroke:0.3px #17365d;">A</span>
<span class="t" style="left:1060.60px;top:65.69px;font-size:43px;color:#17365d;font-family:'Liberation Serif',serif;-webkit-text-stroke:0.3px #17365d;">a</span>
<div style="left:1080px;top:70px;width:25px;height:60px;overflow:hidden;"><span class="t" style="left:3.60px;top:-0.64px;font-size:38.5px;color:#17365d;font-family:'Liberation Serif',serif;-webkit-text-stroke:0.3px #17365d;">B</span></div>
<span class="t" style="left:1042.30px;top:116.54px;font-size:12px;color:#1a1a4a;letter-spacing:0.322px;">Название</span>
<div style="left:1117px;top:67px;width:16.5px;height:24px;border:1px solid #c9d3e0;border-radius:0 3px 0 0;background:linear-gradient(#eef1f5,#dfe4ea);"></div>
<svg style="left:1121.5px;top:76px;" width="7" height="4" viewBox="0 0 7 4"><path d="M0 4 L7 4 L3.5 0 Z" fill="#b5bcc8"/></svg>
<div style="left:1117px;top:92px;width:16.5px;height:23px;border:1px solid #a9c1e2;background:linear-gradient(#dbe7f6,#c3d6ee 50%,#cfdff3);"></div>
<svg style="left:1121.5px;top:101.5px;" width="7" height="4" viewBox="0 0 7 4"><path d="M0 0 L7 0 L3.5 4 Z" fill="#5f7fae"/></svg>
<div style="left:1117px;top:116px;width:16.5px;height:23.5px;border:1px solid #a9c1e2;border-radius:0 0 3px 0;background:linear-gradient(#dbe7f6,#c3d6ee 50%,#cfdff3);"></div>
<svg style="left:1121.5px;top:122px;" width="7" height="10" viewBox="0 0 7 10"><rect x="0" y="0.5" width="7" height="1.4" fill="#5f7fae"/><path d="M0 4 L7 4 L3.5 8 Z" fill="#5f7fae"/></svg>
<svg style="left:1150px;top:68px;" width="36" height="34" viewBox="0 0 36 34"><text x="2.6" y="22.4" font-family="Liberation Sans" font-weight="bold" font-size="25.8" textLength="16.5" lengthAdjust="spacingAndGlyphs" fill="#df94e4" stroke="#a23aae" stroke-width=".9">A</text><text x="10.3" y="30.6" font-family="Liberation Serif" font-weight="bold" font-size="35" textLength="22" lengthAdjust="spacingAndGlyphs" fill="#b4cff2" stroke="#3f72c8" stroke-width="1">A</text></svg>
<span class="t" style="left:1139.50px;top:113.04px;font-size:12px;color:#1b3f80;letter-spacing:0.346px;">Изменить</span>
<span class="t" style="left:1147.70px;top:129.44px;font-size:12px;color:#1b3f80;letter-spacing:-0.121px;">стили</span>
<svg style="left:1183.7px;top:133.5px;" width="5" height="3" viewBox="0 0 5 3"><path d="M0 0 L5 0 L2.5 3 Z" fill="#6a86b4"/></svg>
<div style="left:1207.8px;top:61.5px;width:103.79999999999995px;height:104px;border:1px solid #a9c1de;border-radius:4px;background:linear-gradient(#e1eaf6 0,#dbe6f4 12%,#cfdcef 13.5%,#d3dff1 50%,#d9e4f3 81%,#d9e4f3 100%);box-shadow:inset 0 0 0 1px rgba(255,255,255,.55),1px 1px 0 rgba(255,255,255,.55);overflow:hidden;"><div style="left:-1px;top:83.5px;width:103.79999999999995px;height:20px;background:#c2d8f0;"></div></div>
<span class="t" style="left:1211.80px;top:150.34px;font-size:12px;color:#3e6aaa;letter-spacing:0.313px;">Редактирование</span>
<svg style="left:1216px;top:68.6px;" width="15.4" height="14.6" viewBox="0 0 15.4 14.6"><rect x="2.6" y="0.4" width="3" height="2.6" rx=".6" fill="#2f3f66"/><rect x="9.6" y="0.4" width="3" height="2.6" rx=".6" fill="#2f3f66"/><path d="M2.2 3 H6 L7.2 8 V13.6 H0.6 V8 Z" fill="#f2f5fa" stroke="#3a4c78" stroke-width="1"/><path d="M9.2 3 H13 L14.6 8 V13.6 H8 V8 Z" fill="#f2f5fa" stroke="#3a4c78" stroke-width="1"/><path d="M0.8 9 H7 M8.2 9 H14.4" stroke="#7f93c0" stroke-width="1"/><rect x="6.4" y="5" width="2.4" height="3.4" fill="#3a4c78"/></svg>
<span class="t" style="left:1237.50px;top:70.74px;font-size:12px;color:#1b3f80;letter-spacing:0.012px;">Найти</span>
<svg style="left:1277.7px;top:75.0px;" width="5" height="3" viewBox="0 0 5 3"><path d="M0 0 L5 0 L2.5 3 Z" fill="#6a86b4"/></svg>
<span class="t" style="left:1216.30px;top:93.16px;font-size:9.5px;color:#4a4a4a;font-weight:bold;">a</span>
<span class="t" style="left:1221.60px;top:93.24px;font-size:9.5px;color:#a8a8a8;font-family:'Liberation Serif',serif;">b</span>
<span class="t" style="left:1222.40px;top:101.36px;font-size:9.5px;color:#3a3a3a;font-weight:bold;">a</span>
<span class="t" style="left:1227.60px;top:101.36px;font-size:9.5px;color:#2f9a3a;font-weight:bold;">c</span>
<svg style="left:1216.4px;top:102.6px;" width="7" height="6" viewBox="0 0 7 6"><path d="M1 0.4 V3.4 H5.6 M3.8 1.6 L5.8 3.4 L3.8 5.2" fill="none" stroke="#44527a" stroke-width="1.1"/></svg>
<span class="t" style="left:1237.50px;top:96.64px;font-size:12px;color:#1b3f80;letter-spacing:0.109px;">Заменить</span>
<svg style="left:1219px;top:119.5px;" width="10" height="15" viewBox="0 0 10 15"><path d="M1 0.8 L1 11.5 L3.6 9 L5.6 13.6 L7.4 12.8 L5.4 8.4 L9 8.2 Z" fill="#fff" stroke="#333" stroke-width=".9"/></svg>
<span class="t" style="left:1237.50px;top:122.24px;font-size:12px;color:#1b3f80;letter-spacing:-0.070px;">Выделить</span>
<svg style="left:1299.1px;top:126.5px;" width="5" height="3" viewBox="0 0 5 3"><path d="M0 0 L5 0 L2.5 3 Z" fill="#6a86b4"/></svg>
<!-- s3_ruler -->
<div style="left:0px;top:171px;width:1366px;height:537px;background:linear-gradient(#a2bfe8 0,#9ebce6 5%,#8dadda 29%,#7b9ed0 49%,#6a8fc4 62%,#5a82b9 71%,#557eb5 75.5%,#5983bb 81%,#6290cb 91%,#6a98d3 100%);"></div>
<svg style="left:0px;top:0px;" width="250" height="330" viewBox="0 0 250 330"><path d="M28 199 L239 199 L239 217 Q136.5 244.6 28 287 Z" fill="rgba(255,255,255,.2)"/><path d="M239 217 Q136.5 244.6 28 287 L28 307.5 Q136.5 243.7 239 218.7 Z" fill="rgba(255,255,255,.1)"/><path d="M28 307.5 Q136.5 243.7 239 218.7" fill="none" stroke="rgba(255,255,255,.13)" stroke-width="1.5"/></svg>
<div style="left:0px;top:171px;width:1366px;height:28px;background:#9ebde7;"></div>
<div style="left:0px;top:199px;width:28px;height:509px;background:linear-gradient(#a9c5ec,#a3c1ea 50%,#9fbfeb);"></div>
<div style="left:0.5px;top:171px;width:28px;height:27.5px;border:1px solid #5f84c4;background:#a6c2ea;"></div>
<div style="left:5px;top:175px;width:19px;height:19px;border:1px solid #6c8fcb;background:linear-gradient(#cfdcf0,#f4f7fc);"></div>
<svg style="left:11px;top:180px;" width="9" height="10" viewBox="0 0 9 10"><path d="M1.2 0 V8.3 H8.5" fill="none" stroke="#1a2238" stroke-width="2.2"/></svg>
<div style="left:239px;top:176px;width:895.5px;height:17px;background:#fff;border:1px solid #aac4e6;border-left:none;border-right:none;"></div>
<div style="left:239px;top:176px;width:64.4px;height:17px;background:#b4cbed;border:1px solid #c9dbf3;"></div>
<div style="left:1068.3px;top:176px;width:66.2px;height:17px;background:#b4cbed;border:1px solid #c9dbf3;"></div>
<span class="t" style="left:342.78px;top:179.09px;font-size:12.3px;color:#4f6083;">1</span>
<span class="t" style="left:385.28px;top:179.09px;font-size:12.3px;color:#4f6083;">2</span>
<span class="t" style="left:427.78px;top:179.09px;font-size:12.3px;color:#4f6083;">3</span>
<span class="t" style="left:470.28px;top:179.09px;font-size:12.3px;color:#4f6083;">4</span>
<span class="t" style="left:512.78px;top:179.09px;font-size:12.3px;color:#4f6083;">5</span>
<span class="t" style="left:555.28px;top:179.09px;font-size:12.3px;color:#4f6083;">6</span>
<span class="t" style="left:597.78px;top:179.09px;font-size:12.3px;color:#4f6083;">7</span>
<span class="t" style="left:640.28px;top:179.09px;font-size:12.3px;color:#4f6083;">8</span>
<span class="t" style="left:682.78px;top:179.09px;font-size:12.3px;color:#4f6083;">9</span>
<span class="t" style="left:721.86px;top:179.09px;font-size:12.3px;color:#4f6083;">10</span>
<span class="t" style="left:764.82px;top:179.09px;font-size:12.3px;color:#4f6083;">11</span>
<span class="t" style="left:806.86px;top:179.09px;font-size:12.3px;color:#4f6083;">12</span>
<span class="t" style="left:849.36px;top:179.09px;font-size:12.3px;color:#4f6083;">13</span>
<span class="t" style="left:891.86px;top:179.09px;font-size:12.3px;color:#4f6083;">14</span>
<span class="t" style="left:934.36px;top:179.09px;font-size:12.3px;color:#4f6083;">15</span>
<span class="t" style="left:976.86px;top:179.09px;font-size:12.3px;color:#4f6083;">16</span>
<span class="t" style="left:1019.36px;top:179.09px;font-size:12.3px;color:#4f6083;">17</span>
<span class="t" style="left:1104.36px;top:179.09px;font-size:12.3px;color:#4f6083;">19</span>
<span class="t" style="left:257.78px;top:179.09px;font-size:12.3px;color:#4f6083;">1</span>
<svg style="left:0;top:0" width="1366" height="200"><rect x="313.5" y="184" width="1.5" height="1.5" fill="#4f6083"/><rect x="324.1" y="181.5" width="1" height="6" fill="#56688a"/><rect x="334.5" y="184" width="1.5" height="1.5" fill="#4f6083"/><rect x="356.0" y="184" width="1.5" height="1.5" fill="#4f6083"/><rect x="366.6" y="181.5" width="1" height="6" fill="#56688a"/><rect x="377.0" y="184" width="1.5" height="1.5" fill="#4f6083"/><rect x="398.5" y="184" width="1.5" height="1.5" fill="#4f6083"/><rect x="409.1" y="181.5" width="1" height="6" fill="#56688a"/><rect x="419.5" y="184" width="1.5" height="1.5" fill="#4f6083"/><rect x="441.0" y="184" width="1.5" height="1.5" fill="#4f6083"/><rect x="451.6" y="181.5" width="1" height="6" fill="#56688a"/><rect x="462.0" y="184" width="1.5" height="1.5" fill="#4f6083"/><rect x="483.5" y="184" width="1.5" height="1.5" fill="#4f6083"/><rect x="494.1" y="181.5" width="1" height="6" fill="#56688a"/><rect x="504.5" y="184" width="1.5" height="1.5" fill="#4f6083"/><rect x="526.0" y="184" width="1.5" height="1.5" fill="#4f6083"/><rect x="536.6" y="181.5" width="1" height="6" fill="#56688a"/><rect x="547.0" y="184" width="1.5" height="1.5" fill="#4f6083"/><rect x="568.5" y="184" width="1.5" height="1.5" fill="#4f6083"/><rect x="579.1" y="181.5" width="1" height="6" fill="#56688a"/><rect x="589.5" y="184" width="1.5" height="1.5" fill="#4f6083"/><rect x="611.0" y="184" width="1.5" height="1.5" fill="#4f6083"/><rect x="621.6" y="181.5" width="1" height="6" fill="#56688a"/><rect x="632.0" y="184" width="1.5" height="1.5" fill="#4f6083"/><rect x="653.5" y="184" width="1.5" height="1.5" fill="#4f6083"/><rect x="664.1" y="181.5" width="1" height="6" fill="#56688a"/><rect x="674.5" y="184" width="1.5" height="1.5" fill="#4f6083"/><rect x="696.0" y="184" width="1.5" height="1.5" fill="#4f6083"/><rect x="706.6" y="181.5" width="1" height="6" fill="#56688a"/><rect x="717.0" y="184" width="1.5" height="1.5" fill="#4f6083"/><rect x="738.5" y="184" width="1.5" height="1.5" fill="#4f6083"/><rect x="749.1" y="181.5" width="1" height="6" fill="#56688a"/><rect x="759.5" y="184" width="1.5" height="1.5" fill="#4f6083"/><rect x="781.0" y="184" width="1.5" height="1.5" fill="#4f6083"/><rect x="791.6" y="181.5" width="1" height="6" fill="#56688a"/><rect x="802.0" y="184" width="1.5" height="1.5" fill="#4f6083"/><rect x="823.5" y="184" width="1.5" height="1.5" fill="#4f6083"/><rect x="834.1" y="181.5" width="1" height="6" fill="#56688a"/><rect x="844.5" y="184" width="1.5" height="1.5" fill="#4f6083"/><rect x="866.0" y="184" width="1.5" height="1.5" fill="#4f6083"/><rect x="876.6" y="181.5" width="1" height="6" fill="#56688a"/><rect x="887.0" y="184" width="1.5" height="1.5" fill="#4f6083"/><rect x="908.5" y="184" width="1.5" height="1.5" fill="#4f6083"/><rect x="919.1" y="181.5" width="1" height="6" fill="#56688a"/><rect x="929.5" y="184" width="1.5" height="1.5" fill="#4f6083"/><rect x="951.0" y="184" width="1.5" height="1.5" fill="#4f6083"/><rect x="961.6" y="181.5" width="1" height="6" fill="#56688a"/><rect x="972.0" y="184" width="1.5" height="1.5" fill="#4f6083"/><rect x="993.5" y="184" width="1.5" height="1.5" fill="#4f6083"/><rect x="1004.1" y="181.5" width="1" height="6" fill="#56688a"/><rect x="1014.5" y="184" width="1.5" height="1.5" fill="#4f6083"/><rect x="1036.0" y="184" width="1.5" height="1.5" fill="#4f6083"/><rect x="1046.7" y="181.5" width="1" height="6" fill="#56688a"/><rect x="1057.0" y="184" width="1.5" height="1.5" fill="#4f6083"/><rect x="1078.5" y="184" width="1.5" height="1.5" fill="#4f6083"/><rect x="1089.2" y="181.5" width="1" height="6" fill="#56688a"/><rect x="1099.5" y="184" width="1.5" height="1.5" fill="#4f6083"/><rect x="1121.0" y="184" width="1.5" height="1.5" fill="#4f6083"/><rect x="292.0" y="184" width="1.5" height="1.5" fill="#4f6083"/><rect x="281.6" y="181.5" width="1" height="6" fill="#56688a"/><rect x="271.0" y="184" width="1.5" height="1.5" fill="#4f6083"/><rect x="249.5" y="184" width="1.5" height="1.5" fill="#4f6083"/><rect x="239.1" y="181.5" width="1" height="6" fill="#56688a"/><rect x="356.0" y="194" width="1" height="3" fill="#6b7fa3"/><rect x="409.1" y="194" width="1" height="3" fill="#6b7fa3"/><rect x="462.2" y="194" width="1" height="3" fill="#6b7fa3"/><rect x="515.3" y="194" width="1" height="3" fill="#6b7fa3"/><rect x="568.4" y="194" width="1" height="3" fill="#6b7fa3"/><rect x="621.5" y="194" width="1" height="3" fill="#6b7fa3"/><rect x="674.6" y="194" width="1" height="3" fill="#6b7fa3"/><rect x="727.7" y="194" width="1" height="3" fill="#6b7fa3"/><rect x="780.8" y="194" width="1" height="3" fill="#6b7fa3"/><rect x="833.9" y="194" width="1" height="3" fill="#6b7fa3"/><rect x="887.0" y="194" width="1" height="3" fill="#6b7fa3"/><rect x="940.1" y="194" width="1" height="3" fill="#6b7fa3"/><rect x="993.2" y="194" width="1" height="3" fill="#6b7fa3"/><rect x="1046.3" y="194" width="1" height="3" fill="#6b7fa3"/></svg>
<svg style="left:297px;top:172px;" width="13" height="28" viewBox="0 0 13 28"><path d="M1.2 1.4 H11.8 V3.6 L6.5 9.8 L1.2 3.6 Z" fill="#d3dae6" stroke="#4a5e86" stroke-width="1"/><path d="M6.5 12.2 L11.8 17.2 V20 H1.2 V17.2 Z" fill="#d3dae6" stroke="#4a5e86" stroke-width="1"/><rect x="1.2" y="20.6" width="10.6" height="5.8" fill="#d8dfea" stroke="#4a5e86" stroke-width="1"/></svg>
<svg style="left:1062px;top:183px;" width="13" height="11" viewBox="0 0 13 11"><path d="M6.5 1.2 L11.8 6.2 V9.4 H1.2 V6.2 Z" fill="#d3dae6" stroke="#4a5e86" stroke-width="1"/></svg>
<div style="left:5.3px;top:272px;width:17.7px;height:436px;background:#fff;border:1px solid #aac4e6;border-bottom:none;"></div>
<div style="left:5.3px;top:272px;width:17.7px;height:87.5px;background:#b4cbed;border:1px solid #c9dbf3;"></div>
<span class="t" style="left:4.2px;top:396.3px;width:20px;height:12px;line-height:12px;text-align:center;font-size:12.3px;color:#4f6083;transform:rotate(-90deg);">1</span>
<span class="t" style="left:4.2px;top:438.8px;width:20px;height:12px;line-height:12px;text-align:center;font-size:12.3px;color:#4f6083;transform:rotate(-90deg);">2</span>
<span class="t" style="left:4.2px;top:481.3px;width:20px;height:12px;line-height:12px;text-align:center;font-size:12.3px;color:#4f6083;transform:rotate(-90deg);">3</span>
<span class="t" style="left:4.2px;top:523.8px;width:20px;height:12px;line-height:12px;text-align:center;font-size:12.3px;color:#4f6083;transform:rotate(-90deg);">4</span>
<span class="t" style="left:4.2px;top:566.3px;width:20px;height:12px;line-height:12px;text-align:center;font-size:12.3px;color:#4f6083;transform:rotate(-90deg);">5</span>
<span class="t" style="left:4.2px;top:608.8px;width:20px;height:12px;line-height:12px;text-align:center;font-size:12.3px;color:#4f6083;transform:rotate(-90deg);">6</span>
<span class="t" style="left:4.2px;top:651.3px;width:20px;height:12px;line-height:12px;text-align:center;font-size:12.3px;color:#4f6083;transform:rotate(-90deg);">7</span>
<span class="t" style="left:4.2px;top:693.8px;width:20px;height:12px;line-height:12px;text-align:center;font-size:12.3px;color:#4f6083;transform:rotate(-90deg);">8</span>
<span class="t" style="left:4.2px;top:311.3px;width:20px;height:12px;line-height:12px;text-align:center;font-size:12.3px;color:#4f6083;transform:rotate(-90deg);">1</span>
<span class="t" style="left:4.2px;top:268.8px;width:20px;height:12px;line-height:12px;text-align:center;font-size:12.3px;color:#4f6083;transform:rotate(-90deg);">2</span>
<svg style="left:0;top:0" width="30" height="708"><rect x="13.5" y="369.5" width="1.5" height="1.5" fill="#4f6083"/><rect x="11" y="380.2" width="6" height="1" fill="#56688a"/><rect x="13.5" y="390.5" width="1.5" height="1.5" fill="#4f6083"/><rect x="13.5" y="412.0" width="1.5" height="1.5" fill="#4f6083"/><rect x="11" y="422.8" width="6" height="1" fill="#56688a"/><rect x="13.5" y="433.0" width="1.5" height="1.5" fill="#4f6083"/><rect x="13.5" y="454.5" width="1.5" height="1.5" fill="#4f6083"/><rect x="11" y="465.2" width="6" height="1" fill="#56688a"/><rect x="13.5" y="475.5" width="1.5" height="1.5" fill="#4f6083"/><rect x="13.5" y="497.0" width="1.5" height="1.5" fill="#4f6083"/><rect x="11" y="507.8" width="6" height="1" fill="#56688a"/><rect x="13.5" y="518.0" width="1.5" height="1.5" fill="#4f6083"/><rect x="13.5" y="539.5" width="1.5" height="1.5" fill="#4f6083"/><rect x="11" y="550.2" width="6" height="1" fill="#56688a"/><rect x="13.5" y="560.5" width="1.5" height="1.5" fill="#4f6083"/><rect x="13.5" y="582.0" width="1.5" height="1.5" fill="#4f6083"/><rect x="11" y="592.8" width="6" height="1" fill="#56688a"/><rect x="13.5" y="603.0" width="1.5" height="1.5" fill="#4f6083"/><rect x="13.5" y="624.5" width="1.5" height="1.5" fill="#4f6083"/><rect x="11" y="635.2" width="6" height="1" fill="#56688a"/><rect x="13.5" y="645.5" width="1.5" height="1.5" fill="#4f6083"/><rect x="13.5" y="667.0" width="1.5" height="1.5" fill="#4f6083"/><rect x="11" y="677.8" width="6" height="1" fill="#56688a"/><rect x="13.5" y="688.0" width="1.5" height="1.5" fill="#4f6083"/><rect x="13.5" y="348.0" width="1.5" height="1.5" fill="#4f6083"/><rect x="11" y="337.8" width="6" height="1" fill="#56688a"/><rect x="13.5" y="327.0" width="1.5" height="1.5" fill="#4f6083"/><rect x="13.5" y="305.5" width="1.5" height="1.5" fill="#4f6083"/><rect x="11" y="295.2" width="6" height="1" fill="#56688a"/><rect x="13.5" y="284.5" width="1.5" height="1.5" fill="#4f6083"/></svg>
<div style="left:1345.3px;top:171px;width:20.7px;height:537px;background:#a7c3eb;"></div>
<div style="left:1345.5px;top:199px;width:19.5px;height:445px;background:linear-gradient(90deg,#6f93c6 0,#84a6d6 25%,#8aaad8 60%,#6f93c6 100%);border-left:1px solid #b9d0f0;"></div>
<div style="left:1346.5px;top:199px;width:18.5px;height:445px;background:linear-gradient(rgba(160,190,232,.55) 0,rgba(140,172,220,.35) 30%,rgba(90,128,184,0) 60%,rgba(90,128,184,.1) 100%);"></div>
<svg style="left:1350.5px;top:206px;" width="11" height="6" viewBox="0 0 11 6"><path d="M0 6 L11 6 L5.5 0 Z" fill="#4a6a9e"/></svg>
<svg style="left:1350.5px;top:630px;" width="11" height="6" viewBox="0 0 11 6"><path d="M0 0 L11 0 L5.5 6 Z" fill="#4a6a9e"/></svg>
<div style="left:1346.3px;top:516px;width:18.3px;height:38.5px;border:1px solid #7f93b4;border-radius:3px;background:linear-gradient(90deg,#fbfcfd 0,#eceff3 40%,#d3d9e2 62%,#c3cad6 100%);box-shadow:inset 0 0 0 1px rgba(255,255,255,.75);"></div>
<svg style="left:1351.5px;top:531px;" width="8" height="8" viewBox="0 0 8 8"><rect x="0" y="0" width="8" height="1" fill="#697184"/><rect x="0" y="2" width="8" height="1" fill="#697184"/><rect x="0" y="4" width="8" height="1" fill="#697184"/><rect x="0" y="6" width="8" height="1" fill="#697184"/></svg>
<div style="left:1350px;top:173px;width:10px;height:2.2px;background:#1f3a6e;"></div>
<div style="left:1345.5px;top:177.3px;width:20.5px;height:20px;border:1px solid #aab4c6;background:#c9ced8;"></div>
<svg style="left:1350px;top:181px;" width="13" height="13" viewBox="0 0 13 13"><rect x="0.5" y="0.5" width="8" height="8" fill="#f8f8f8" stroke="#444" stroke-width="1"/><rect x="4.5" y="4.5" width="8" height="8" fill="#f8f8f8" stroke="#444" stroke-width="1"/><path d="M2 3 H7 M6 7 H11 M6 9.5 H9" stroke="#7a8aaa" stroke-width=".9"/></svg>
<svg style="left:1350.7px;top:651px;" width="7.4" height="7.4" viewBox="0 0 9 9"><path d="M0.5 4.5 L4.5 0.5 L8.5 4.5 Z M0.5 8.5 L4.5 4.5 L8.5 8.5 Z" fill="#141c30"/></svg>
<svg style="left:1349.2px;top:669.2px;" width="10.6" height="10.6" viewBox="0 0 10.6 10.6"><circle cx="5.3" cy="5.3" r="3.3" fill="#d4d4d4" stroke="#222" stroke-width="1.1"/><circle cx="4.6" cy="4.6" r="1.2" fill="#fff" opacity=".8"/></svg>
<svg style="left:1350.7px;top:692.2px;" width="7.4" height="7.4" viewBox="0 0 9 9"><path d="M0.5 0.5 L8.5 0.5 L4.5 4.5 Z M0.5 4.5 L8.5 4.5 L4.5 8.5 Z" fill="#141c30"/></svg>
<!-- s4_doc -->
<div style="left:239px;top:199px;width:894.5px;height:58px;background:#fff;border:1px solid #6c7f9c;border-top:none;box-shadow:2.5px 2.5px 3.5px rgba(30,48,85,.7);"></div>
<div style="left:239px;top:272px;width:894.5px;height:440px;background:#fff;border:1px solid #6c7f9c;border-bottom:none;box-shadow:2.5px 2.5px 3.5px rgba(30,48,85,.7);"></div>
<div style="left:304px;top:358px;width:743.8px;height:46.2px;background:#a9cdf2;"></div>
<div style="left:304px;top:404px;width:590.8px;height:45px;background:#a9cdf2;"></div>
<div style="left:304px;top:448.6px;width:702.6px;height:83px;background:#a9cdf2;"></div>
<div style="left:302px;top:507.7px;width:769px;height:1px;background:#4f81bd;"></div>
<span class="t" style="left:319.10px;top:380.34px;font-size:17.5px;color:#1b4a86;font-family:'Liberation Serif',serif;font-weight:bold;letter-spacing:1.688px;">4.</span>
<span class="t" style="left:342.60px;top:362.96px;font-size:38.5px;color:#1b4a86;font-family:'Liberation Serif',serif;-webkit-text-stroke:0.22px #1b4a86;">К</span>
<span class="t" style="left:367.00px;top:359.81px;font-size:42.5px;color:#1b4a86;font-family:'Liberation Serif',serif;letter-spacing:-0.154px;-webkit-text-stroke:0.22px #1b4a86;word-spacing:2px;">акая из данных функций не является</span>
<span class="t" style="left:304.60px;top:403.31px;font-size:42.5px;color:#1b4a86;font-family:'Liberation Serif',serif;letter-spacing:-0.189px;-webkit-text-stroke:0.22px #1b4a86;word-spacing:3px;">прямой пропорциональностью:</span>
<span class="t" style="left:308.51px;top:469.43px;font-size:18px;color:#13233f;font-family:'Liberation Serif',serif;font-style:italic;">y</span>
<span class="t" style="left:320.60px;top:469.43px;font-size:18px;color:#13233f;font-family:'Liberation Serif',serif;">=</span>
<span class="t" style="left:336.50px;top:469.84px;font-size:17.5px;color:#13233f;font-family:'Liberation Serif',serif;">2</span>
<span class="t" style="left:345.43px;top:469.43px;font-size:18px;color:#13233f;font-family:'Liberation Serif',serif;font-style:italic;">x</span>
<span class="t" style="left:465.70px;top:454.84px;font-size:37.8px;color:#1b4a86;font-family:'Liberation Serif',serif;">2</span>
<span class="t" style="left:486.80px;top:454.84px;font-size:37.8px;color:#1b4a86;font-family:'Liberation Serif',serif;">)</span>
<span class="t" style="left:514.21px;top:469.43px;font-size:18px;color:#13233f;font-family:'Liberation Serif',serif;font-style:italic;">y</span>
<span class="t" style="left:526.80px;top:469.43px;font-size:18px;color:#13233f;font-family:'Liberation Serif',serif;">=</span>
<div style="left:542.2px;top:478.9px;width:10.8px;height:1px;background:#13233f;"></div>
<span class="t" style="left:543.53px;top:457.34px;font-size:17.5px;color:#13233f;font-family:'Liberation Serif',serif;font-style:italic;">x</span>
<span class="t" style="left:543.90px;top:483.76px;font-size:17px;color:#13233f;font-family:'Liberation Serif',serif;">5</span>
<span class="t" style="left:666.60px;top:454.84px;font-size:37.8px;color:#1b4a86;font-family:'Liberation Serif',serif;">3</span>
<span class="t" style="left:686.80px;top:454.84px;font-size:37.8px;color:#1b4a86;font-family:'Liberation Serif',serif;">)</span>
<span class="t" style="left:715.11px;top:469.43px;font-size:18px;color:#13233f;font-family:'Liberation Serif',serif;font-style:italic;">y</span>
<span class="t" style="left:728.10px;top:469.43px;font-size:18px;color:#13233f;font-family:'Liberation Serif',serif;">=</span>
<div style="left:743px;top:479.1px;width:18px;height:1px;background:#13233f;"></div>
<span class="t" style="left:744.40px;top:457.76px;font-size:17px;color:#13233f;font-family:'Liberation Serif',serif;letter-spacing:-2.100px;">10</span>
<span class="t" style="left:747.43px;top:483.54px;font-size:17.5px;color:#13233f;font-family:'Liberation Serif',serif;font-style:italic;">x</span>
<span class="t" style="left:872.00px;top:454.84px;font-size:37.8px;color:#1b4a86;font-family:'Liberation Serif',serif;">4</span>
<span class="t" style="left:894.00px;top:454.84px;font-size:37.8px;color:#1b4a86;font-family:'Liberation Serif',serif;">)</span>
<span class="t" style="left:922.31px;top:469.43px;font-size:18px;color:#13233f;font-family:'Liberation Serif',serif;font-style:italic;">y</span>
<span class="t" style="left:934.40px;top:469.43px;font-size:18px;color:#13233f;font-family:'Liberation Serif',serif;">=</span>
<span class="t" style="left:949.63px;top:469.43px;font-size:18px;color:#13233f;font-family:'Liberation Serif',serif;font-style:italic;">x</span>
<span class="t" style="left:961.00px;top:469.43px;font-size:18px;color:#13233f;font-family:'Liberation Serif',serif;">+</span>
<span class="t" style="left:973.40px;top:469.84px;font-size:17.5px;color:#13233f;font-family:'Liberation Serif',serif;">1</span>
<!-- s5_status -->
<div style="left:0px;top:708px;width:1366px;height:26px;background:linear-gradient(#d9e8fb 0,#cfe1f8 35%,#bcd4f2 40%,#c5dbf5 75%,#d3e4f8 100%);border-top:1px solid #86a7d4;"></div>
<div style="left:0px;top:709px;width:1366px;height:1px;background:#eef5fd;"></div>
<span class="t" style="left:8.70px;top:715.84px;font-size:12px;color:#1b3a78;letter-spacing:0.239px;">Страница: 4 из 4</span>
<span class="t" style="left:124.40px;top:715.84px;font-size:12px;color:#1b3a78;letter-spacing:0.400px;">Число слов: 12/706</span>
<span class="t" style="left:294.40px;top:715.84px;font-size:12px;color:#1b3a78;letter-spacing:0.175px;">Русский (Россия)</span>
<div style="left:114.5px;top:710px;width:1px;height:22px;background:#9db9df;"></div>
<div style="left:115.5px;top:710px;width:1px;height:22px;background:#edf4fc;"></div>
<div style="left:248.9px;top:710px;width:1px;height:22px;background:#9db9df;"></div>
<div style="left:249.9px;top:710px;width:1px;height:22px;background:#edf4fc;"></div>
<div style="left:400px;top:710px;width:1px;height:22px;background:#9db9df;"></div>
<div style="left:401px;top:710px;width:1px;height:22px;background:#edf4fc;"></div>
<svg style="left:257px;top:711px;" width="22" height="18" viewBox="0 0 22 18"><path d="M2 10 L10 13.5 L19 9 L19 12 L10 16.5 L2 13 Z" fill="#5f86c8" stroke="#2f4f8f" stroke-width=".8"/><path d="M2 10 L11 6 L19 9 L10 13.5 Z" fill="#f4f6fb" stroke="#6a7fa8" stroke-width=".8"/><path d="M10 1 L18 9 M18 1 L10 9" stroke="#e24a2a" stroke-width="2.4"/></svg>
<div style="left:1032.5px;top:709px;width:333.5px;height:25px;background:linear-gradient(#8aacdd 0,#9dbbe6 14%,#a9c5eb 40%,#b6cff1 70%,#c3d9f5 100%);border-left:1px solid #7d9fd2;"></div>
<div style="left:1033.5px;top:709px;width:1px;height:25px;background:rgba(255,255,255,.45);"></div>
<div style="left:1038.4px;top:709.5px;width:112.6px;height:22.5px;border:1px solid #8fb0de;border-radius:2px;background:linear-gradient(#dfeaf9,#cbddf5 45%,#bdd3f0 50%,#d0e1f7);"></div>
<div style="left:1038.4px;top:709.5px;width:23px;height:22.5px;border:1px solid #c9a35a;background:linear-gradient(#fbd79e,#f9bd66 45%,#f7ad42 50%,#fcd68c);"></div>
<div style="left:1083.2px;top:710.5px;width:1px;height:20.5px;background:#a9c3e6;"></div>
<div style="left:1105.1px;top:710.5px;width:1px;height:20.5px;background:#a9c3e6;"></div>
<div style="left:1127.5px;top:710.5px;width:1px;height:20.5px;background:#a9c3e6;"></div>
<svg style="left:1043.5px;top:713.5px;" width="13" height="15" viewBox="0 0 13 15"><rect x="0.5" y="0.5" width="12" height="14" fill="#fdfdfd" stroke="#555" stroke-width="1"/><path d="M3 4 H10 M3 6.5 H10 M3 9 H10 M3 11.5 H10" stroke="#555" stroke-width="1"/></svg>
<svg style="left:1064.5px;top:713px;" width="16" height="16" viewBox="0 0 16 16"><path d="M1 2 C3.5 1 5.5 1 7.5 2.5 V13 C5.5 11.5 3.5 11.5 1 12.5 Z M15 2 C12.5 1 10.5 1 8.5 2.5 V13 C10.5 11.5 12.5 11.5 15 12.5 Z" fill="#f3f3f3" stroke="#444" stroke-width="1"/><path d="M3 4.5 H6 M3 7 H6 M3 9.5 H6 M10 4.5 H13 M10 7 H13 M10 9.5 H13" stroke="#777" stroke-width=".8"/><path d="M6 13.5 L8 15.5 L10 13.5" fill="#444"/></svg>
<svg style="left:1086.5px;top:713.5px;" width="17" height="16" viewBox="0 0 17 16"><rect x="0.5" y="0.5" width="11" height="10" fill="#fdfdfd" stroke="#555" stroke-width="1"/><path d="M2.5 3 H9.5 M2.5 5.5 H9.5 M2.5 8 H7" stroke="#666" stroke-width="1"/><circle cx="11.8" cy="11" r="4" fill="#3a8ad0" stroke="#245a9a" stroke-width=".8"/><path d="M9.5 10 C11 8.5 12 11 14 9.5 M10 13 C11.5 12 13 13.5 14.5 12" stroke="#6fc06a" stroke-width="1.2" fill="none"/></svg>
<svg style="left:1110px;top:714.5px;" width="14" height="13" viewBox="0 0 14 13"><path d="M1 1 H13 M5 4.7 H13 M5 8.3 H11 M1 12 H13" stroke="#667" stroke-width="1.3"/><rect x="1" y="4" width="2" height="1.5" fill="#667"/><rect x="1" y="7.6" width="2" height="1.5" fill="#667"/></svg>
<svg style="left:1132.5px;top:714.5px;" width="14" height="13" viewBox="0 0 14 13"><path d="M0.5 1 H13.5 M0.5 4.3 H13.5 M0.5 7.6 H13.5 M0.5 10.9 H13.5" stroke="#333" stroke-width="1.5"/></svg>
<span class="t" style="left:1159.90px;top:715.44px;font-size:12px;color:#1b3a78;letter-spacing:0.027px;">90%</span>
<div style="left:1214px;top:719px;width:127px;height:1px;background:#7c96bf;"></div>
<div style="left:1214px;top:720px;width:127px;height:1px;background:#e9f1fb;"></div>
<div style="left:1278px;top:714.5px;width:1px;height:10px;background:#7c96bf;"></div>
<svg style="left:1194px;top:709.5px;" width="20" height="20" viewBox="0 0 20 20"><defs><linearGradient id="zgm" x1="0" y1="0" x2="0" y2="1"><stop offset="0" stop-color="#ffffff"/><stop offset=".48" stop-color="#eef2f8"/><stop offset=".52" stop-color="#d3dbe8"/><stop offset="1" stop-color="#eef3fa"/></linearGradient></defs><circle cx="10" cy="10" r="9.3" fill="url(#zgm)" stroke="#6b82aa" stroke-width="1.2"/><circle cx="10" cy="10" r="7.9" fill="none" stroke="rgba(255,255,255,.9)" stroke-width="1"/><path d="M5 10 H15" stroke="#3d4d6e" stroke-width="2.3"/></svg>
<svg style="left:1340.8px;top:709.5px;" width="20" height="20" viewBox="0 0 20 20"><defs><linearGradient id="zgp" x1="0" y1="0" x2="0" y2="1"><stop offset="0" stop-color="#ffffff"/><stop offset=".48" stop-color="#eef2f8"/><stop offset=".52" stop-color="#d3dbe8"/><stop offset="1" stop-color="#eef3fa"/></linearGradient></defs><circle cx="10" cy="10" r="9.3" fill="url(#zgp)" stroke="#6b82aa" stroke-width="1.2"/><circle cx="10" cy="10" r="7.9" fill="none" stroke="rgba(255,255,255,.9)" stroke-width="1"/><path d="M5 10 H15" stroke="#3d4d6e" stroke-width="2.3"/><path d="M10 5 V15" stroke="#3d4d6e" stroke-width="2.3"/></svg>
<svg style="left:1265px;top:711px;" width="11" height="17" viewBox="0 0 11 17"><path d="M0.5 0.5 H10.5 V10 L5.5 16 L0.5 10 Z" fill="#e4ecf8" stroke="#6f86b0" stroke-width="1"/><path d="M2 2 H9 V9.5 L5.5 13.8 L2 9.5 Z" fill="none" stroke="#fff" stroke-width=".8"/></svg>
<!-- s6_taskbar -->
<div style="left:0px;top:734px;width:1366px;height:34px;background:linear-gradient(90deg,#23262e 0,#1d2027 4.5%,#262a33 8%,#373b45 11%,#3e424c 17.5%,#4e525b 18.8%,#4a4e57 22%,#363a43 27%,#2c3039 45%,#2b2f38 62%,#272a33 73%,#1f2229 80%,#1c1e25 100%);border-top:1px solid #0a0b0e;overflow:hidden;"><div style="left:0px;top:0px;width:1366px;height:1px;background:rgba(255,255,255,.38);"></div><div style="left:255px;top:-14px;width:110px;height:70px;background:radial-gradient(ellipse at 50% 40%,rgba(110,116,128,.55),rgba(70,76,88,0) 70%);transform:skewX(-35deg);"></div><div style="left:540px;top:-12px;width:120px;height:36px;background:radial-gradient(ellipse at 50% 50%,rgba(120,126,138,.6),rgba(80,86,98,0) 70%);"></div><div style="left:600px;top:4px;width:90px;height:30px;background:radial-gradient(ellipse at 50% 50%,rgba(80,86,98,.4),rgba(80,86,98,0) 70%);"></div><div style="left:735px;top:-10px;width:110px;height:40px;background:radial-gradient(ellipse at 50% 50%,rgba(105,111,123,.55),rgba(80,86,98,0) 70%);"></div><div style="left:820px;top:6px;width:70px;height:30px;background:radial-gradient(ellipse at 50% 50%,rgba(85,90,102,.4),rgba(80,86,98,0) 70%);"></div><div style="left:380px;top:8px;width:150px;height:30px;background:radial-gradient(ellipse at 50% 60%,rgba(70,75,88,.35),rgba(80,86,98,0) 70%);"></div></div>
<div style="left:11.8px;top:726.2px;width:42.4px;height:42.4px;border-radius:50%;background:radial-gradient(circle at 50% 42%,#4a8fd0 0,#2a68a8 40%,#163e70 68%,#0c2546 100%);box-shadow:0 0 0 1px rgba(8,18,34,.9),0 0 3px 1px rgba(90,150,210,.55),inset 0 0 2px 1.5px rgba(130,200,250,.75),inset 0 8px 8px -4px rgba(200,230,255,.55);"></div>
<svg style="left:19px;top:731.5px;" width="30" height="31" viewBox="0 0 30 31"><path d="M3.2 6.8 C6.8 3.8 10.2 4 13.6 6.4 L11.6 14.6 C8.4 12.6 5 12.8 1.4 15.4 Z" fill="#e8592a"/><path d="M4.2 7.2 C7 5.2 9.8 5.2 12.4 6.9 L11.8 9.2 C9 7.8 6.4 8 3.6 9.8 Z" fill="#f6a070" opacity=".7"/><path d="M15.2 7 C18.8 9.4 22.4 9.2 26.8 5.8 L24.8 14.2 C20.6 17.2 17 17.2 13.2 15 Z" fill="#86c23c"/><path d="M16 8.2 C19.4 10.2 22.4 10 25.8 7.6 L25.2 9.8 C22 12 19 12 15.6 10.2 Z" fill="#c6e888" opacity=".7"/><path d="M1 17.2 C4.6 14.6 8 14.6 11.2 16.4 L9.2 24.8 C6 23 2.8 23.2 -0.8 25.8 Z" fill="#2f9de4"/><path d="M12.8 16.8 C16.6 19 20.2 19 24.4 16 L22.4 24.6 C18.4 27.6 14.8 27.4 10.8 25.2 Z" fill="#f9c41c"/></svg>
<div style="left:86px;top:741px;width:20px;height:20px;border-radius:50%;background:radial-gradient(circle at 50% 40%,#b45cf8,#8a3ce8);"></div>
<svg style="left:90.5px;top:746.5px;" width="11" height="10" viewBox="0 0 11 10"><path d="M5.5 0.8 C6.3 0.8 6.9 1.4 7.4 2.4 L10 7 C10.5 8.2 9.8 9 8.6 9 H2.4 C1.2 9 0.5 8.2 1 7 L3.6 2.4 C4.1 1.4 4.7 0.8 5.5 0.8 Z" fill="#fff"/></svg>
<svg style="left:131.9px;top:740px;" width="12" height="26" viewBox="0 0 12 26"><rect x="1.00" y="1.00" width="2" height="2" fill="#0c0e12"/><rect x="0.00" y="0.00" width="2" height="2" fill="#8b8f99"/><rect x="5.05" y="1.00" width="2" height="2" fill="#0c0e12"/><rect x="4.05" y="0.00" width="2" height="2" fill="#8b8f99"/><rect x="9.10" y="1.00" width="2" height="2" fill="#0c0e12"/><rect x="8.10" y="0.00" width="2" height="2" fill="#8b8f99"/><rect x="1.00" y="8.07" width="2" height="2" fill="#0c0e12"/><rect x="0.00" y="7.07" width="2" height="2" fill="#8b8f99"/><rect x="5.05" y="8.07" width="2" height="2" fill="#0c0e12"/><rect x="4.05" y="7.07" width="2" height="2" fill="#8b8f99"/><rect x="9.10" y="8.07" width="2" height="2" fill="#0c0e12"/><rect x="8.10" y="7.07" width="2" height="2" fill="#8b8f99"/><rect x="1.00" y="15.14" width="2" height="2" fill="#0c0e12"/><rect x="0.00" y="14.14" width="2" height="2" fill="#8b8f99"/><rect x="5.05" y="15.14" width="2" height="2" fill="#0c0e12"/><rect x="4.05" y="14.14" width="2" height="2" fill="#8b8f99"/><rect x="9.10" y="15.14" width="2" height="2" fill="#0c0e12"/><rect x="8.10" y="14.14" width="2" height="2" fill="#8b8f99"/><rect x="1.00" y="22.21" width="2" height="2" fill="#0c0e12"/><rect x="0.00" y="21.21" width="2" height="2" fill="#8b8f99"/><rect x="5.05" y="22.21" width="2" height="2" fill="#0c0e12"/><rect x="4.05" y="21.21" width="2" height="2" fill="#8b8f99"/><rect x="9.10" y="22.21" width="2" height="2" fill="#0c0e12"/><rect x="8.10" y="21.21" width="2" height="2" fill="#8b8f99"/></svg>
<div style="left:153px;top:735px;width:46.5px;height:33px;border:1px solid #9a9da4;border-bottom:none;border-radius:3px 3px 0 0;background:linear-gradient(135deg,#85888f 0,#64676e 40%,#4d5057 100%);box-shadow:inset 0 0 0 1px rgba(255,255,255,.3),0 0 0 1px rgba(0,0,0,.55);"></div>
<div style="left:166.5px;top:741.5px;width:19.5px;height:19.5px;border-radius:50%;background:#f2f2f2;"></div>
<svg style="left:166.5px;top:741.5px;" width="19.5" height="19.5" viewBox="0 0 19.5 19.5"><circle cx="9.75" cy="9.75" r="8.6" fill="#f4f4f4"/><path d="M5.6 4.8 L9.75 10.6 L13.9 4.8 M9.75 10.6 V15.5" fill="none" stroke="#e0202a" stroke-width="1.9" stroke-linecap="round"/></svg>
<div style="left:203px;top:735px;width:46px;height:32.2px;border:1px solid #e4e5e8;border-radius:3px;background:linear-gradient(135deg,#cfd0d3 0,#b2b3b7 35%,#96979b 70%,#a2a3a7 100%);box-shadow:inset 0 0 0 1px rgba(255,255,255,.35),0 0 0 1px rgba(0,0,0,.6);"></div>
<svg style="left:214px;top:740px;" width="24" height="23" viewBox="0 0 24 23"><path d="M8 3.6 L20.6 2.4 L21.4 18.4 L8.6 20.2 Z" fill="#fbfcfe" stroke="#b8c2d6" stroke-width=".6"/><path d="M10 13.2 L19.4 12.2 M10 15.2 L19.6 14.2 M10 17.2 L19.8 16.2" stroke="#2f5fb4" stroke-width="1.1"/><path d="M10.4 5.6 L11.6 10.8 L13 6.8 L14.4 10.6 L15.8 5.2" fill="none" stroke="#2f5fb4" stroke-width="1.2"/><path d="M16.6 6 H19 M16.6 8 H19.2 M16.6 10 H19.2" stroke="#2f5fb4" stroke-width="1"/><path d="M6.2 2.4 C3.2 5 2.4 13 3.6 18.6 L8.6 20.2 C7 15 7.2 8 8 3.6 Z" fill="#2a5db0" stroke="#1c4288" stroke-width=".5"/><path d="M6.2 2.4 L8 3.6 L20.6 2.4 L18.6 1.4 Z" fill="#dfe6f2"/></svg>
<svg style="left:1143.2px;top:740px;" width="12" height="26" viewBox="0 0 12 26"><rect x="1.00" y="1.00" width="2" height="2" fill="#0c0e12"/><rect x="0.00" y="0.00" width="2" height="2" fill="#8b8f99"/><rect x="5.05" y="1.00" width="2" height="2" fill="#0c0e12"/><rect x="4.05" y="0.00" width="2" height="2" fill="#8b8f99"/><rect x="9.10" y="1.00" width="2" height="2" fill="#0c0e12"/><rect x="8.10" y="0.00" width="2" height="2" fill="#8b8f99"/><rect x="1.00" y="8.07" width="2" height="2" fill="#0c0e12"/><rect x="0.00" y="7.07" width="2" height="2" fill="#8b8f99"/><rect x="5.05" y="8.07" width="2" height="2" fill="#0c0e12"/><rect x="4.05" y="7.07" width="2" height="2" fill="#8b8f99"/><rect x="9.10" y="8.07" width="2" height="2" fill="#0c0e12"/><rect x="8.10" y="7.07" width="2" height="2" fill="#8b8f99"/><rect x="1.00" y="15.14" width="2" height="2" fill="#0c0e12"/><rect x="0.00" y="14.14" width="2" height="2" fill="#8b8f99"/><rect x="5.05" y="15.14" width="2" height="2" fill="#0c0e12"/><rect x="4.05" y="14.14" width="2" height="2" fill="#8b8f99"/><rect x="9.10" y="15.14" width="2" height="2" fill="#0c0e12"/><rect x="8.10" y="14.14" width="2" height="2" fill="#8b8f99"/><rect x="1.00" y="22.21" width="2" height="2" fill="#0c0e12"/><rect x="0.00" y="21.21" width="2" height="2" fill="#8b8f99"/><rect x="5.05" y="22.21" width="2" height="2" fill="#0c0e12"/><rect x="4.05" y="21.21" width="2" height="2" fill="#8b8f99"/><rect x="9.10" y="22.21" width="2" height="2" fill="#0c0e12"/><rect x="8.10" y="21.21" width="2" height="2" fill="#8b8f99"/></svg>
<span class="t" style="left:1163.40px;top:742.50px;font-size:13px;color:#fff;letter-spacing:0.562px;">RU</span>
<svg style="left:1205.5px;top:748.5px;" width="9" height="5" viewBox="0 0 9 5"><path d="M0 5 L9 5 L4.5 0 Z" fill="#f2f2f2"/></svg>
<svg style="left:1232px;top:742px;" width="21" height="19" viewBox="0 0 21 19"><rect x="2" y="1.5" width="4" height="9" fill="#e8e8e8" stroke="#9a9a9a" stroke-width=".7"/><rect x="3" y="0" width="2" height="2" fill="#ddd"/><rect x="6.5" y="4.5" width="13" height="10" fill="#1b1d25" stroke="#f2f2f2" stroke-width="1.4"/><path d="M11 15 V17.5 M7.5 17.8 H18" stroke="#f2f2f2" stroke-width="1.5"/></svg>
<svg style="left:1263px;top:742px;" width="19" height="19" viewBox="0 0 19 19"><path d="M2 1 V18" stroke="#f4f4f4" stroke-width="1.6"/><path d="M3.5 2 C7 0.5 9 4 13 2.5 L17.5 6 C14 8.5 10 6 7.5 9.5 C6 9 4.5 9.5 3.5 10 Z" fill="#f4f4f4"/></svg>
<span class="t" style="left:1303.50px;top:746.20px;font-size:13px;color:#fff;letter-spacing:0.314px;">20:38</span>
<div style="left:1352px;top:735px;width:14px;height:33px;border:1px solid #5a5c64;border-right:none;background:linear-gradient(90deg,#34363e,#1c1e24);box-shadow:inset 1px 0 0 rgba(255,255,255,.12);"></div>
</div>
</body></html>
